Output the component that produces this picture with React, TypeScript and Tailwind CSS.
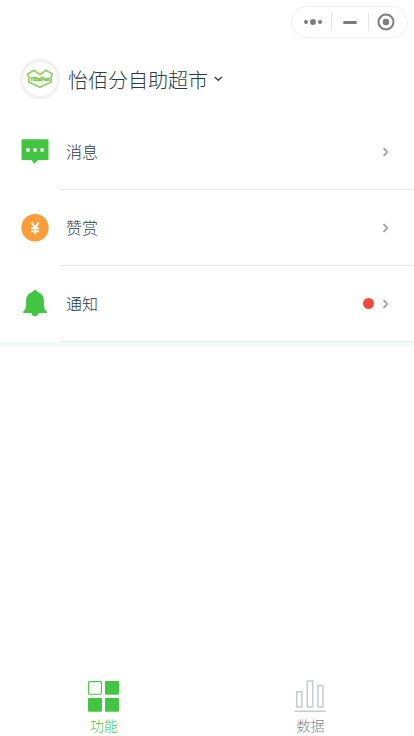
import type { ReactNode } from "react";

interface MenuItem {
  label: string;
  icon: ReactNode;
  unread?: boolean;
}

function MessageIcon() {
  return (
    <svg width="28" height="26" viewBox="0 0 28 26">
      <path d="M1.500 0.300h25a1 1 0 0 1 1 1v18.700a1 1 0 0 1-1 1H17l-3.400 3.800-3.400-3.800H1.500a1 1 0 0 1-1-1V1.300a1 1 0 0 1 1-1z" fill="#42c642" />
      <circle cx="7" cy="11" r="2" fill="#fff" />
      <circle cx="14" cy="11" r="2" fill="#fff" />
      <circle cx="21.200" cy="11" r="2" fill="#fff" />
    </svg>
  );
}

function RewardIcon() {
  return (
    <svg width="28" height="28" viewBox="0 0 28 28">
      <circle cx="14" cy="13.700" r="13.700" fill="#fc9d3a" />
      <path d="M10.600 8.600l3.500 5.200 3.500-5.200M14.100 13.500v6.800M10.100 14.400h8M10.100 17.400h8" fill="none" stroke="#fff" strokeWidth="1.900" />
    </svg>
  );
}

function BellIcon() {
  return (
    <svg className="mb-0.5" width="28" height="28" viewBox="0 0 28 28">
      <path
        d="M14 1.100c1.100 0 1.800.7 2 1.600 4 1 6.900 4.200 6.900 8.400v5.500c0 2.300.9 4.300 2.900 5.900v1.500h-8c-.4 2-2 3.100-3.800 3.100s-3.400-1.100-3.800-3.100h-8v-1.500c2-1.600 2.900-3.600 2.900-5.900v-5.500c0-4.200 2.900-7.400 6.900-8.400.2-.9.900-1.600 2-1.600z"
        fill="#42c642"
      />
    </svg>
  );
}

const menuItems: MenuItem[] = [
  { label: "消息", icon: <MessageIcon /> },
  { label: "赞赏", icon: <RewardIcon /> },
  { label: "通知", icon: <BellIcon />, unread: true },
];

function Capsule() {
  return (
    <div className="flex h-8 w-[117px] items-center rounded-full border border-[#f0f0f0]">
      <div className="flex w-[39px] items-center justify-center gap-[2px] pl-[3px]">
        <span className="h-1 w-1 rounded-full bg-[#7d7d7d]" />
        <span className="h-1.5 w-1.5 rounded-full bg-[#7d7d7d]" />
        <span className="h-1 w-1 rounded-full bg-[#7d7d7d]" />
      </div>
      <div className="flex h-[18px] w-[38px] items-center justify-center border-x border-[#e2e2e2] pr-px">
        <span className="h-[3px] w-3.5 rounded-full bg-[#7d7d7d]" />
      </div>
      <div className="flex flex-1 items-center justify-center pr-1">
        <svg width="18" height="18" viewBox="0 0 18 18">
          <circle cx="9" cy="9" r="7.500" fill="none" stroke="#7d7d7d" strokeWidth="2" />
          <circle cx="9" cy="9" r="3.200" fill="#7d7d7d" />
        </svg>
      </div>
    </div>
  );
}

function StoreLogo() {
  return (
    <div className="flex h-10 w-10 items-center justify-center rounded-full border-[3px] border-[#f1f1f1] bg-white">
      <svg className="overflow-visible" width="28" height="20" viewBox="0 0 28 20">
        <path d="M1.600 5L8 1.200l6 4.400 6-4.400L26.400 5l-1.200 3v5L14 18.300 2.800 13V8z" fill="none" stroke="#8fd060" strokeWidth="1.700" />
        <text x="14" y="11.600" textAnchor="middle" fontSize="4.600" fontWeight="700" fontFamily="Liberation Sans, sans-serif" fill="#72bf3c" stroke="#72bf3c" strokeWidth="0.300">
          YiBaiFen
        </text>
        <path d="M10.500 14h7" stroke="#c5e5ad" strokeWidth="1" strokeDasharray="1.500 .5" />
      </svg>
    </div>
  );
}

function MenuRow({ label, icon, unread }: MenuItem) {
  return (
    <div className="flex h-[76px] pl-[21px]">
      <div className="flex w-[39px] items-center">{icon}</div>
      <div className="flex flex-1 items-center border-b border-[#e8e9e9] pr-[25px] pl-1.5">
        <span className="mb-0.5 flex-1 text-base leading-6 font-light text-[#2c3a45]">{label}</span>
        {unread && <span className="mr-2 h-[11px] w-[11px] rounded-full bg-[#f24c38]" />}
        <svg width="7" height="10" viewBox="0 0 7 10">
          <path d="M1.500 1.200L5.300 5 1.500 8.800" fill="none" stroke="#999c9e" strokeWidth="1.700" />
        </svg>
      </div>
    </div>
  );
}

export default function App() {
  return (
    <div className="flex h-screen flex-col overflow-hidden bg-white font-['Noto_Sans_CJK_SC',sans-serif]">
      <div className="flex justify-end pt-1.5 pr-1.5">
        <Capsule />
      </div>

      {/* Store switcher */}
      <header className="mt-[21px] flex h-10 items-center pl-5">
        <StoreLogo />
        <h1 className="mt-0.5 ml-2 text-xl leading-9 font-light text-[#2c3a45]">怡佰分自助超市</h1>
        <svg className="ml-1.5" width="9" height="6" viewBox="0 0 9 6">
          <path d="M0.800 1l3.500 3.300L7.800 1" fill="none" stroke="#3b4852" strokeWidth="1.500" />
        </svg>
      </header>

      <main className="mt-[15px] border-b-[5px] border-[#f7f8f8]">
        {menuItems.map((item) => (
          <MenuRow key={item.label} {...item} />
        ))}
      </main>

      {/* Bottom tabs */}
      <nav className="mt-auto grid h-[57px] grid-cols-2 text-sm leading-5 font-light">
        <div className="flex flex-col items-center text-[#42c642]">
          <svg className="mt-[2px]" width="31" height="31" viewBox="0 0 31 31">
            <rect x="0.600" y="0.600" width="12.800" height="12.600" rx="0.700" fill="none" stroke="#42c642" strokeWidth="1.100" />
            <rect x="17" width="14" height="13.700" rx="1" fill="#42c642" />
            <rect y="17" width="14" height="13.700" rx="1" fill="#42c642" />
            <rect x="17" y="17" width="14" height="13.700" rx="1" fill="#42c642" />
          </svg>
          <span className="mt-[3px] pl-px">功能</span>
        </div>
        <div className="flex flex-col items-center text-[#84898d]">
          <svg className="mt-px mr-px" width="32" height="32" viewBox="0 0 32 32">
            <path
              d="M2.700 11.700h5.200v15.200H2.700zM13.300 1h5.400v25.900h-5.400zM24 5.800h5v21.100h-5zM.3 31.200h31.400"
              fill="none"
              stroke="#c7cbce"
              strokeWidth="1.500"
            />
          </svg>
          <span className="mt-[3px]">数据</span>
        </div>
      </nav>
    </div>
  );
}
